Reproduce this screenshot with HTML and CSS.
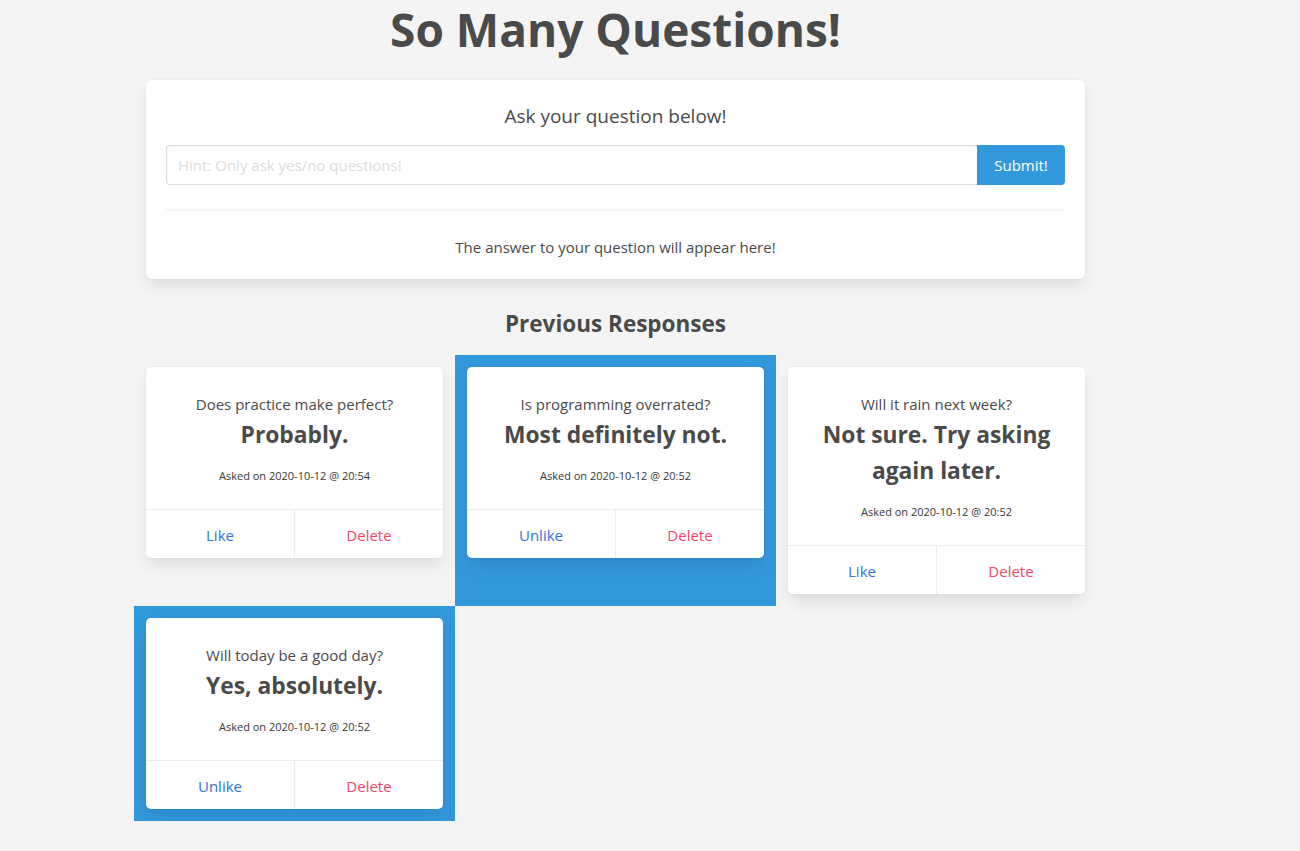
FILE: index.html
```html
<!DOCTYPE html>
<html>
<head>
<meta charset="utf-8">
<link rel="stylesheet" href="styles.css">
</head>
<body>
<div class="container">
  <h1 class="title">So Many Questions!</h1>
  <div class="box">
    <p class="ask">Ask your question below!</p>
    <div class="field">
      <input class="input" type="text" placeholder="Hint: Only ask yes/no questions!">
      <button class="button">Submit!</button>
    </div>
    <hr class="divider">
    <p class="answer-line">The answer to your question will appear here!</p>
  </div>
  <h2 class="subtitle">Previous Responses</h2>
  <div class="columns">
    <div class="column">
      <div class="card">
        <div class="card-content">
          <p class="q">Does practice make perfect?</p>
          <p class="a">Probably.</p>
          <p class="date">Asked on 2020-10-12 @ 20:54</p>
        </div>
        <div class="card-footer">
          <a class="item like">Like</a>
          <a class="item delete">Delete</a>
        </div>
      </div>
    </div>
    <div class="column liked">
      <div class="card">
        <div class="card-content">
          <p class="q">Is programming overrated?</p>
          <p class="a">Most definitely not.</p>
          <p class="date">Asked on 2020-10-12 @ 20:52</p>
        </div>
        <div class="card-footer">
          <a class="item like">Unlike</a>
          <a class="item delete">Delete</a>
        </div>
      </div>
    </div>
    <div class="column">
      <div class="card">
        <div class="card-content">
          <p class="q">Will it rain next week?</p>
          <p class="a">Not sure. Try asking again later.</p>
          <p class="date">Asked on 2020-10-12 @ 20:52</p>
        </div>
        <div class="card-footer">
          <a class="item like">Like</a>
          <a class="item delete">Delete</a>
        </div>
      </div>
    </div>
    <div class="column liked">
      <div class="card">
        <div class="card-content">
          <p class="q">Will today be a good day?</p>
          <p class="a">Yes, absolutely.</p>
          <p class="date">Asked on 2020-10-12 @ 20:52</p>
        </div>
        <div class="card-footer">
          <a class="item like">Unlike</a>
          <a class="item delete">Delete</a>
        </div>
      </div>
    </div>
  </div>
</div>
</body>
</html>
```

FILE: styles.css
```css
* { box-sizing: border-box; }
html, body {
  margin: 0;
  padding: 0;
  background: #f4f4f4;
}
body {
  font-family: "Open Sans", "Noto Sans", sans-serif;
  color: #4a4a4a;
  font-size: 16px;
  line-height: 1.5;
}
p { margin: 0; }
.container {
  width: 939px;
  margin-left: 146px;
}
.title {
  margin: 0 0 21px;
  font-size: 46px;
  line-height: 59px;
  font-weight: 700;
  text-align: center;
  color: #4a4a4a;
}
.box {
  background: #fff;
  border-radius: 6px;
  padding: 20px;
  box-shadow: 0 8px 16px -2px rgba(10,10,10,0.1), 0 0 0 1px rgba(10,10,10,0.02);
}
.ask {
  font-size: 19px;
  line-height: 30px;
  padding-top: 1px;
  text-align: center;
}
.field {
  display: flex;
  margin-top: 14px;
  height: 40px;
}
.input {
  flex: 1;
  height: 40px;
  border: 1px solid #dbdbdb;
  border-right: none;
  border-radius: 4px 0 0 4px;
  padding: 0 11px;
  font-family: inherit;
  font-size: 15px;
  color: #363636;
  box-shadow: inset 0 1px 2px rgba(10,10,10,0.05);
  outline: none;
}
.input::placeholder { color: #dcdcdc; }
.button {
  width: 88px;
  height: 40px;
  border: none;
  border-radius: 0 4px 4px 0;
  background: #3298dc;
  color: #fff;
  font-family: inherit;
  font-size: 15px;
  padding: 0;
}
.divider {
  border: none;
  height: 2px;
  background: #f5f5f5;
  margin: 24px 0;
}
.answer-line {
  text-align: center;
  font-size: 15px;
  line-height: 24px;
}
.subtitle {
  margin: 27px 0 0;
  font-size: 22.5px;
  line-height: 36px;
  font-weight: 700;
  text-align: center;
  color: #4a4a4a;
}
.columns {
  display: flex;
  flex-wrap: wrap;
  margin: 13px -12px 0;
}
.column {
  width: 321px;
  padding: 12px;
}
.column.liked { background: #3298dc; }
.card {
  background: #fff;
  border-radius: 5px;
  box-shadow: 0 8px 16px -2px rgba(10,10,10,0.1), 0 0 0 1px rgba(10,10,10,0.02);
  overflow: hidden;
}
.card-content {
  padding: 24px;
  text-align: center;
}
.q {
  font-size: 15px;
  line-height: 24px;
  padding-top: 1px;
  margin-bottom: -1px;
}
.a {
  font-size: 22.8px;
  line-height: 36px;
  font-weight: 700;
  padding-top: 2px;
  margin-bottom: -2px;
  color: #4a4a4a;
}
.date {
  margin-top: 16px;
  font-size: 11px;
  line-height: 18px;
  color: #363636;
}
.card-footer {
  display: flex;
  border-top: 1px solid #ededed;
}
.item {
  flex: 1;
  text-align: center;
  padding: 13px 12px 11px;
  font-size: 15px;
  line-height: 24px;
  cursor: pointer;
}
.item + .item { border-left: 1px solid #ededed; }
.like { color: #3273dc; }
.delete { color: #f14668; }
```
